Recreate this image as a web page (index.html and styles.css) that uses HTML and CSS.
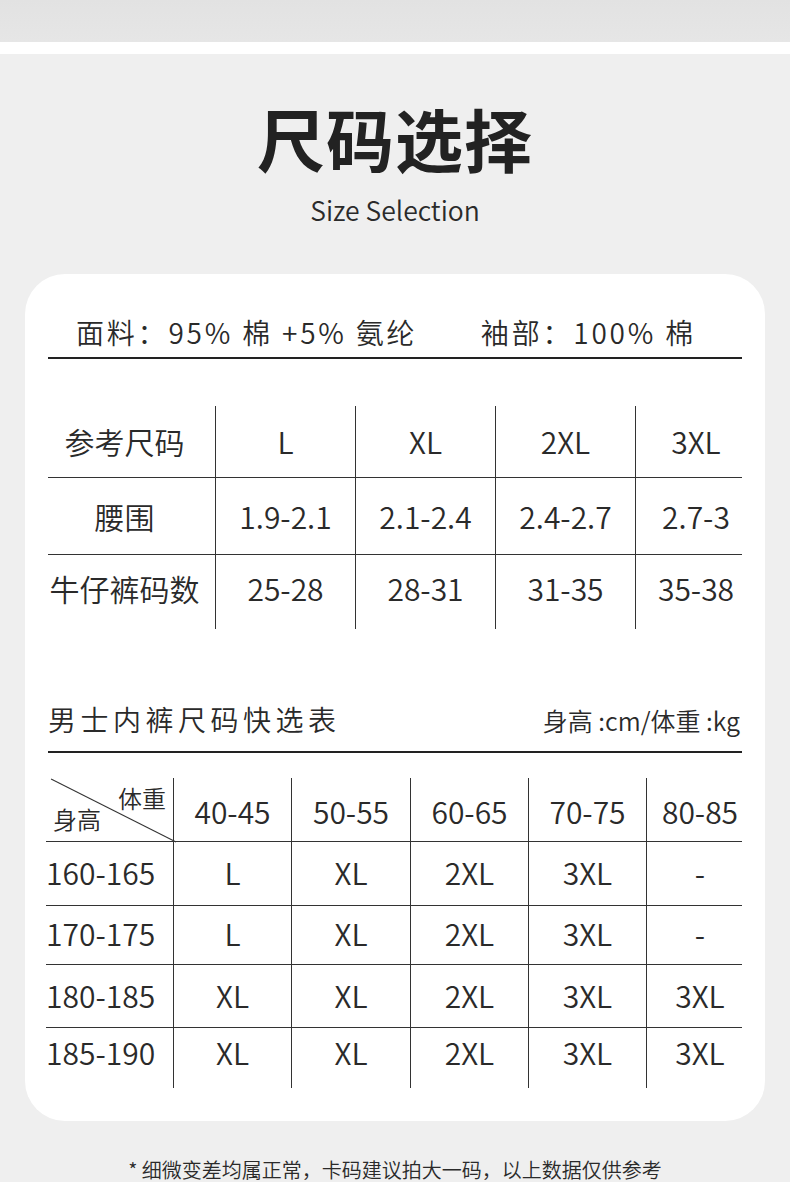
FILE: index.html
```html
<!DOCTYPE html>
<html lang="zh-CN">
<head>
<meta charset="utf-8">
<title>尺码选择</title>
<link rel="stylesheet" href="styles.css">
</head>
<body>
<div class="top-band"></div>
<div class="white-strip"></div>
<header class="head">
  <h1 class="title">尺码选择</h1>
  <p class="subtitle">Size Selection</p>
</header>
<section class="card">
  <div class="fabric">
    <span>面料：95% 棉 +5% 氨纶</span>
    <span>袖部：100% 棉</span>
  </div>

  <div class="ref-table">
    <div class="c c1">参考尺码</div><div class="c">L</div><div class="c">XL</div><div class="c">2XL</div><div class="c clast">3XL</div>
    <div class="c c1 r">腰围</div><div class="c r">1.9-2.1</div><div class="c r">2.1-2.4</div><div class="c r">2.4-2.7</div><div class="c clast r">2.7-3</div>
    <div class="c c1 r r3">牛仔裤码数</div><div class="c r r3">25-28</div><div class="c r r3">28-31</div><div class="c r r3">31-35</div><div class="c clast r r3">35-38</div>
  </div>

  <div class="quick-head">
    <span class="quick-title">男士内裤尺码快选表</span>
    <span class="unit">身高 :cm/体重 :kg</span>
  </div>

  <div class="quick-table">
    <div class="q q1 corner">
      <svg class="diag" viewBox="0 0 122 62" preserveAspectRatio="none"><line x1="3" y1="1" x2="125" y2="63" stroke="#333" stroke-width="1"/></svg>
      <span class="lab-w">体重</span>
      <span class="lab-h">身高</span>
    </div>
    <div class="q hd">40-45</div><div class="q hd">50-55</div><div class="q hd">60-65</div><div class="q hd">70-75</div><div class="q hd qlast">80-85</div>

    <div class="q q1 r ra">160-165</div><div class="q r ra">L</div><div class="q r ra">XL</div><div class="q r ra">2XL</div><div class="q r ra">3XL</div><div class="q r ra qlast">-</div>
    <div class="q q1 r rb">170-175</div><div class="q r rb">L</div><div class="q r rb">XL</div><div class="q r rb">2XL</div><div class="q r rb">3XL</div><div class="q r rb qlast">-</div>
    <div class="q q1 r rc">180-185</div><div class="q r rc">XL</div><div class="q r rc">XL</div><div class="q r rc">2XL</div><div class="q r rc">3XL</div><div class="q r rc qlast">3XL</div>
    <div class="q q1 r rd">185-190</div><div class="q r rd">XL</div><div class="q r rd">XL</div><div class="q r rd">2XL</div><div class="q r rd">3XL</div><div class="q r rd qlast">3XL</div>
  </div>
</section>
<p class="note">* 细微变差均属正常，卡码建议拍大一码，以上数据仅供参考</p>
</body>
</html>
```

FILE: styles.css
```css
* { box-sizing: border-box; }

html, body {
  margin: 0;
  padding: 0;
}

body {
  background: #efefef;
  font-family: "Noto Sans CJK SC", "Noto Sans", sans-serif;
  font-weight: 350;
  color: #222;
  width: 790px;
}

.top-band {
  height: 42px;
  background: linear-gradient(180deg, #e2e2e2 0%, #e6e6e6 100%);
}

.white-strip {
  height: 12px;
  background: #ffffff;
}

.head {
  padding-top: 50px;
  text-align: center;
}

.title {
  margin: 0;
  font-size: 68px;
  line-height: 1;
  font-weight: 700;
  color: #222;
  letter-spacing: 1px;
}

.subtitle {
  margin: 25px 0 0;
  font-size: 26.5px;
  line-height: 1;
  color: #2a2a2a;
}

.card {
  margin: 50px 25px 0;
  width: 740px;
  background: #ffffff;
  border-radius: 40px;
  padding: 44px 23px 33px;
}

.fabric {
  display: flex;
  justify-content: space-between;
  font-size: 28px;
  line-height: 1;
  letter-spacing: 2.8px;
  padding: 0 46px 11px 28px;
  border-bottom: 2px solid #222;
  color: #2a2a2a;
}

.ref-table {
  margin-top: 47px;
  display: grid;
  grid-template-columns: 167px 140px 140px 140px 107px;
  grid-template-rows: 71px 77px 75px;
}

.c {
  display: flex;
  align-items: center;
  justify-content: center;
  font-size: 30px;
  line-height: 1;
  color: #2a2a2a;
  border-left: 1px solid #333;
  white-space: nowrap;
}

.c.c1 {
  border-left: none;
  padding-right: 14px;
}

.c.clast {
  padding-left: 14px;
}

.c.r {
  border-top: 1px solid #333;
}

.c.r3 {
  padding-bottom: 7px;
}

.quick-head {
  margin-top: 76px;
  display: flex;
  justify-content: space-between;
  align-items: baseline;
  padding: 0 2px 18px 0;
  border-bottom: 2px solid #222;
}

.quick-title {
  font-size: 28px;
  line-height: 1;
  letter-spacing: 4.5px;
  color: #2a2a2a;
}

.unit {
  font-size: 25px;
  line-height: 1;
  color: #2a2a2a;
}

.quick-table {
  margin-top: 25px;
  display: grid;
  grid-template-columns: 125px 118px 119px 118px 118px 96px;
  grid-template-rows: 63px 64px 59px 63px 61px;
}

.q {
  display: flex;
  align-items: center;
  justify-content: center;
  font-size: 30px;
  line-height: 1;
  color: #2a2a2a;
  border-left: 1px solid #333;
  white-space: nowrap;
}

.q.q1 {
  border-left: none;
  justify-content: flex-start;
  padding-left: 0;
  margin-left: -2px;
}

.q.qlast {
  padding-left: 11px;
}

.q.hd {
  padding-top: 4px;
}

.q.r {
  border-top: 1px solid #333;
}

.q.ra { padding-bottom: 3px; }
.q.rb { padding-bottom: 3px; }
.q.rc { padding-bottom: 1px; }
.q.rd { padding-bottom: 11px; }

.corner {
  position: relative;
  flex-direction: column;
  align-items: stretch;
  justify-content: flex-start;
}

.q.q1.corner {
  margin-left: 0;
  padding: 8px 7px 0 5px;
}

.diag {
  position: absolute;
  left: 0;
  top: 0;
  width: 125px;
  height: 63px;
  overflow: visible;
}

.lab-w {
  align-self: flex-end;
  font-size: 24px;
  line-height: 1;
}

.lab-h {
  align-self: flex-start;
  font-size: 24px;
  line-height: 1;
  margin-top: -3px;
}

.note {
  margin: 39px 0 0;
  text-align: center;
  font-size: 20px;
  line-height: 1;
  color: #2a2a2a;
}
```
